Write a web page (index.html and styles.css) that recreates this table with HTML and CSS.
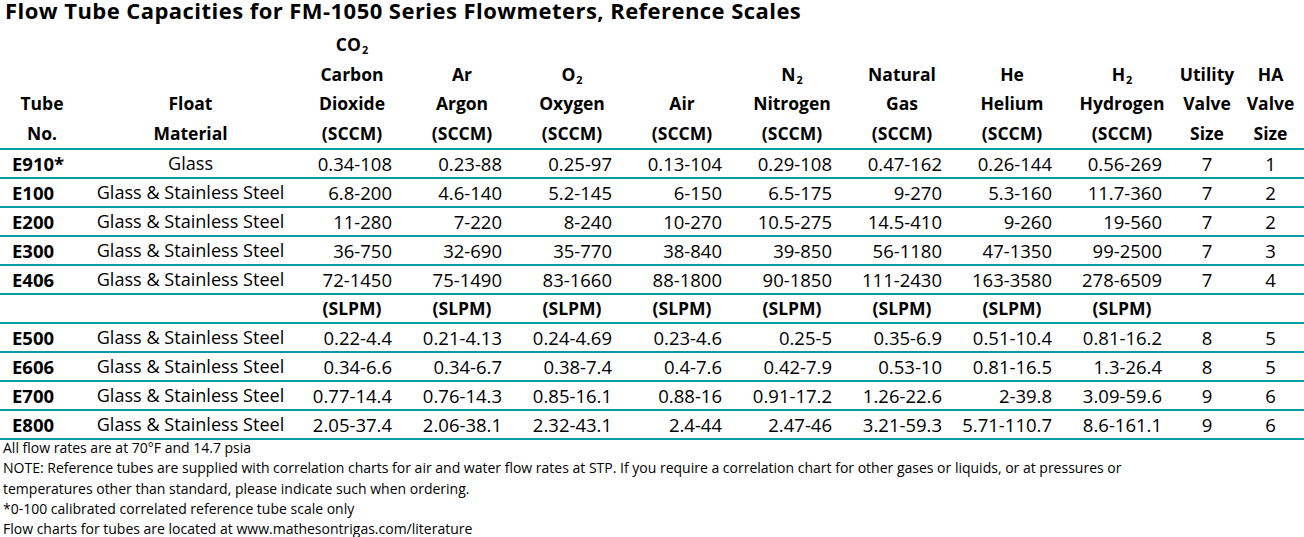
FILE: index.html
```html
<!DOCTYPE html>
<html>
<head>
<meta charset="utf-8">
<title>Flow Tube Capacities</title>
<link rel="stylesheet" href="styles.css">
</head>
<body>
<div class="title">Flow Tube Capacities for FM-1050 Series Flowmeters, Reference Scales</div>
<table class="grid">
  <colgroup>
    <col class="c-tube"><col class="c-float">
    <col class="c-gas"><col class="c-gas"><col class="c-gas"><col class="c-gas">
    <col class="c-gas"><col class="c-gas"><col class="c-gas"><col class="c-gas">
    <col class="c-util"><col class="c-ha">
  </colgroup>
  <thead>
    <tr>
      <th>Tube<br>No.</th>
      <th>Float<br>Material</th>
      <th>CO<sub>2</sub><br>Carbon<br>Dioxide<br>(SCCM)</th>
      <th>Ar<br>Argon<br>(SCCM)</th>
      <th>O<sub>2</sub><br>Oxygen<br>(SCCM)</th>
      <th>Air<br>(SCCM)</th>
      <th>N<sub>2</sub><br>Nitrogen<br>(SCCM)</th>
      <th>Natural<br>Gas<br>(SCCM)</th>
      <th>He<br>Helium<br>(SCCM)</th>
      <th>H<sub>2</sub><br>Hydrogen<br>(SCCM)</th>
      <th>Utility<br>Valve<br>Size</th>
      <th>HA<br>Valve<br>Size</th>
    </tr>
  </thead>
  <tbody>
    <tr><td class="tube">E910*</td><td class="mat">Glass</td><td class="num">0.34-108</td><td class="num">0.23-88</td><td class="num">0.25-97</td><td class="num">0.13-104</td><td class="num">0.29-108</td><td class="num">0.47-162</td><td class="num">0.26-144</td><td class="num">0.56-269</td><td class="ctr">7</td><td class="ctr">1</td></tr>
    <tr><td class="tube">E100</td><td class="mat">Glass &amp; Stainless Steel</td><td class="num">6.8-200</td><td class="num">4.6-140</td><td class="num">5.2-145</td><td class="num">6-150</td><td class="num">6.5-175</td><td class="num">9-270</td><td class="num">5.3-160</td><td class="num">11.7-360</td><td class="ctr">7</td><td class="ctr">2</td></tr>
    <tr><td class="tube">E200</td><td class="mat">Glass &amp; Stainless Steel</td><td class="num">11-280</td><td class="num">7-220</td><td class="num">8-240</td><td class="num">10-270</td><td class="num">10.5-275</td><td class="num">14.5-410</td><td class="num">9-260</td><td class="num">19-560</td><td class="ctr">7</td><td class="ctr">2</td></tr>
    <tr><td class="tube">E300</td><td class="mat">Glass &amp; Stainless Steel</td><td class="num">36-750</td><td class="num">32-690</td><td class="num">35-770</td><td class="num">38-840</td><td class="num">39-850</td><td class="num">56-1180</td><td class="num">47-1350</td><td class="num">99-2500</td><td class="ctr">7</td><td class="ctr">3</td></tr>
    <tr><td class="tube">E406</td><td class="mat">Glass &amp; Stainless Steel</td><td class="num">72-1450</td><td class="num">75-1490</td><td class="num">83-1660</td><td class="num">88-1800</td><td class="num">90-1850</td><td class="num">111-2430</td><td class="num">163-3580</td><td class="num">278-6509</td><td class="ctr">7</td><td class="ctr">4</td></tr>
    <tr class="unit-row"><td></td><td></td><td class="unit">(SLPM)</td><td class="unit">(SLPM)</td><td class="unit">(SLPM)</td><td class="unit">(SLPM)</td><td class="unit">(SLPM)</td><td class="unit">(SLPM)</td><td class="unit">(SLPM)</td><td class="unit">(SLPM)</td><td></td><td></td></tr>
    <tr><td class="tube">E500</td><td class="mat">Glass &amp; Stainless Steel</td><td class="num">0.22-4.4</td><td class="num">0.21-4.13</td><td class="num">0.24-4.69</td><td class="num">0.23-4.6</td><td class="num">0.25-5</td><td class="num">0.35-6.9</td><td class="num">0.51-10.4</td><td class="num">0.81-16.2</td><td class="ctr">8</td><td class="ctr">5</td></tr>
    <tr><td class="tube">E606</td><td class="mat">Glass &amp; Stainless Steel</td><td class="num">0.34-6.6</td><td class="num">0.34-6.7</td><td class="num">0.38-7.4</td><td class="num">0.4-7.6</td><td class="num">0.42-7.9</td><td class="num">0.53-10</td><td class="num">0.81-16.5</td><td class="num">1.3-26.4</td><td class="ctr">8</td><td class="ctr">5</td></tr>
    <tr><td class="tube">E700</td><td class="mat">Glass &amp; Stainless Steel</td><td class="num">0.77-14.4</td><td class="num">0.76-14.3</td><td class="num">0.85-16.1</td><td class="num">0.88-16</td><td class="num">0.91-17.2</td><td class="num">1.26-22.6</td><td class="num">2-39.8</td><td class="num">3.09-59.6</td><td class="ctr">9</td><td class="ctr">6</td></tr>
    <tr><td class="tube">E800</td><td class="mat">Glass &amp; Stainless Steel</td><td class="num">2.05-37.4</td><td class="num">2.06-38.1</td><td class="num">2.32-43.1</td><td class="num">2.4-44</td><td class="num">2.47-46</td><td class="num">3.21-59.3</td><td class="num">5.71-110.7</td><td class="num">8.6-161.1</td><td class="ctr">9</td><td class="ctr">6</td></tr>
  </tbody>
</table>
<div class="notes">
  <p>All flow rates are at 70°F and 14.7 psia</p>
  <p>NOTE: Reference tubes are supplied with correlation charts for air and water flow rates at STP. If you require a correlation chart for other gases or liquids, or at pressures or</p>
  <p>temperatures other than standard, please indicate such when ordering.</p>
  <p>*0-100 calibrated correlated reference tube scale only</p>
  <p>Flow charts for tubes are located at www.mathesontrigas.com/literature</p>
</div>
</body>
</html>
```

FILE: styles.css
```css
html, body {
  margin: 0;
  padding: 0;
  background: #ffffff;
  color: #000000;
  font-family: "Open Sans", "Noto Sans", sans-serif;
}

.title {
  height: 30px;
  padding-top: 0;
  line-height: 21px;
  padding-left: 5px;
  font-size: 22px;
  font-weight: 700;
  letter-spacing: 0.45px;
  white-space: nowrap;
}

.grid {
  width: 1304px;
  table-layout: fixed;
  border-collapse: separate;
  border-spacing: 0;
}

.c-tube { width: 84px; }
.c-float { width: 213px; }
.c-gas { width: 110px; }
.c-util { width: 60px; }
.c-ha { width: 67px; }

.grid th {
  padding: 0;
  font-size: 17.5px;
  font-weight: 700;
  line-height: 29.5px;
  text-align: center;
  vertical-align: bottom;
  white-space: nowrap;
  border-bottom: 2px solid #079aa3;
}

.grid sub {
  font-size: 0.62em;
  line-height: 0;
  vertical-align: -0.3em;
  margin-left: 1px;
}

.grid td {
  padding: 0;
  font-size: 18.5px;
  line-height: 27px;
  white-space: nowrap;
  vertical-align: middle;
  border-bottom: 2px solid #079aa3;
}

.grid td.tube {
  font-weight: 700;
  padding-left: 12px;
  text-align: left;
}

.grid td.mat {
  font-size: 18.1px;
  text-align: center;
}

.grid td.num {
  text-align: right;
  padding-right: 15px;
}

.grid td.ctr {
  text-align: center;
}

.grid td.unit {
  font-size: 17.5px;
  font-weight: 700;
  text-align: center;
}

.notes {
  margin-top: -2px;
  padding-left: 3px;
}

.notes p {
  margin: 0;
  font-size: 14px;
  line-height: 20.25px;
  white-space: nowrap;
}
```
